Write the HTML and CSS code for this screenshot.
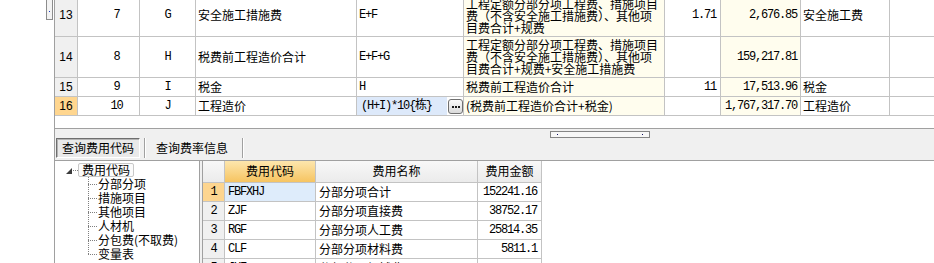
FILE: index.html
```html
<!DOCTYPE html>
<html lang="zh-CN">
<head>
<meta charset="utf-8">
<title>费用汇总</title>
<link rel="stylesheet" href="styles.css">
</head>
<body>
<div class="app">
  <div class="gutter"><div class="thumb"><i class="dot"></i></div></div>
  <div class="main">
    <div class="frame">
      <div class="grid">
        <div class="row h42">
          <div class="rh">13</div>
          <div class="seq mono">7</div>
          <div class="ctr mono">G</div>
          <div>安全施工措施费</div>
          <div class="mono">E+F</div>
          <div class="desc"><span>工程定额分部分项工程费、措施项目费（不含安全施工措施费）、其他项目费合计+规费</span></div>
          <div class="num mono">1.71</div>
          <div class="amt mono">2,676.85</div>
          <div>安全施工费</div>
          <div class="end"></div>
        </div>
        <div class="row h41">
          <div class="rh">14</div>
          <div class="seq mono">8</div>
          <div class="ctr mono">H</div>
          <div>税费前工程造价合计</div>
          <div class="mono">E+F+G</div>
          <div class="desc"><span>工程定额分部分项工程费、措施项目费（不含安全施工措施费）、其他项目费合计+规费+安全施工措施费</span></div>
          <div class="num mono"></div>
          <div class="amt mono">159,217.81</div>
          <div></div>
          <div class="end"></div>
        </div>
        <div class="row h19">
          <div class="rh">15</div>
          <div class="seq mono">9</div>
          <div class="ctr mono">I</div>
          <div>税金</div>
          <div class="mono">H</div>
          <div class="desc"><span>税费前工程造价合计</span></div>
          <div class="num mono">11</div>
          <div class="amt mono">17,513.96</div>
          <div>税金</div>
          <div class="end"></div>
        </div>
        <div class="row h19">
          <div class="rh cur">16</div>
          <div class="seq mono">10</div>
          <div class="ctr mono">J</div>
          <div>工程造价</div>
          <div class="expr"><span class="edit mono">(H+I)*10{栋}</span><span class="dots"><svg width="13" height="13" viewBox="0 0 13 13"><rect x="3" y="6" width="2" height="2" fill="#1a1a1a"/><rect x="6" y="6" width="2" height="2" fill="#1a1a1a"/><rect x="9" y="6" width="2" height="2" fill="#1a1a1a"/></svg></span></div>
          <div class="desc"><span>(税费前工程造价合计+税金)</span></div>
          <div class="num mono"></div>
          <div class="amt mono">1,767,317.70</div>
          <div>工程造价</div>
          <div class="end"></div>
        </div>
      </div>
    </div>

    <div class="band">
      <div class="handle"><i></i><i></i></div>
      <div class="tabs">
        <div class="tab active">查询费用代码</div>
        <div class="sep"></div>
        <div class="tab">查询费率信息</div>
        <div class="sep"></div>
      </div>
    </div>

    <div class="lower">
      <div class="tree">
        <div class="root">
          <svg class="exp" width="6" height="6" viewBox="0 0 6 6"><path d="M6 0V6H0Z" fill="#3c3c3c"/></svg>
          <span class="conn"></span>
          <span class="label">费用代码</span>
        </div>
        <div class="children">
          <div class="node"><span class="branch"></span><span class="txt">分部分项</span></div>
          <div class="node"><span class="branch"></span><span class="txt">措施项目</span></div>
          <div class="node"><span class="branch"></span><span class="txt">其他项目</span></div>
          <div class="node"><span class="branch"></span><span class="txt">人材机</span></div>
          <div class="node"><span class="branch"></span><span class="txt">分包费(不取费)</span></div>
          <div class="node last"><span class="branch"></span><span class="txt">变量表</span></div>
        </div>
      </div>

      <div class="codes">
        <div class="crow head">
          <div class="corner"></div>
          <div class="hsel">费用代码</div>
          <div>费用名称</div>
          <div>费用金额</div>
        </div>
        <div class="crow">
          <div class="crh cur mono">1</div>
          <div class="code sel mono">FBFXHJ</div>
          <div class="name">分部分项合计</div>
          <div class="money mono">152241.16</div>
        </div>
        <div class="crow">
          <div class="crh mono">2</div>
          <div class="code mono">ZJF</div>
          <div class="name">分部分项直接费</div>
          <div class="money mono">38752.17</div>
        </div>
        <div class="crow">
          <div class="crh mono">3</div>
          <div class="code mono">RGF</div>
          <div class="name">分部分项人工费</div>
          <div class="money mono">25814.35</div>
        </div>
        <div class="crow">
          <div class="crh mono">4</div>
          <div class="code mono">CLF</div>
          <div class="name">分部分项材料费</div>
          <div class="money mono">5811.1</div>
        </div>
        <div class="crow">
          <div class="crh mono">5</div>
          <div class="code mono">JXF</div>
          <div class="name">分部分项机械费</div>
          <div class="money mono"></div>
        </div>
      </div>
    </div>
  </div>
</div>
</body>
</html>
```

FILE: styles.css
```css
* { box-sizing: border-box; }
html, body { margin: 0; padding: 0; background: #fff; }
body {
  width: 934px;
  height: 263px;
  overflow: hidden;
  font: 12px/1.2 "Noto Sans CJK SC", "Noto Sans", sans-serif;
  color: #000;
}
.mono {
  font-family: "Liberation Mono", "Noto Sans CJK SC", monospace;
  letter-spacing: -1.2px;
}
.app { display: flex; height: 263px; }

/* left gutter with scroll thumb */
.gutter { width: 54px; flex: none; background: #fff; }
.thumb {
  margin-left: 46px;
  margin-top: -1px;
  width: 7px;
  height: 21px;
  border: 1px solid #8c8c8c;
  background: #f3f3f3;
  display: flex;
  justify-content: center;
  align-items: flex-end;
  padding-bottom: 7px;
}
.thumb .dot { display: block; width: 1px; height: 1px; background: #1c3cc8; }

.main {
  flex: 1;
  min-width: 0;
  border-left: 1px solid #a0a0a0;
  display: flex;
  flex-direction: column;
}

/* upper grid */
.frame {
  flex: none;
  height: 129px;
  border-bottom: 1px solid #a0a0a0;
  overflow: hidden;
  background: #fff;
}
.grid { margin-top: -5px; }
.row {
  display: grid;
  grid-template-columns: 23px 62px 56px 161px 107px 201px 56px 80px 89px 1fr;
}
.row > div {
  border-right: 1px solid #c3c3c3;
  border-bottom: 1px solid #c3c3c3;
  display: flex;
  align-items: center;
  padding: 0 2px;
  white-space: nowrap;
  overflow: hidden;
}
.row > .end { border-right: none; }
.h42 { height: 42px; }
.h41 { height: 41px; }
.h19 { height: 19px; }
.row > .rh {
  background: #f0f0f0;
  justify-content: center;
  font-family: "Liberation Sans", sans-serif;
  padding: 0;
}
.row > .rh.cur { background: #ffd68f; }
.row > .seq { justify-content: center; padding-left: 18px; }
.row > .ctr { justify-content: center; }
.row > .desc {
  background: #fffdee;
  white-space: normal;
  line-height: 12px;
}
.row > .num { justify-content: flex-end; padding-right: 4px; }
.row > .amt { background: #fffdee; justify-content: flex-end; padding-right: 3px; }
.row > .expr { padding: 0; align-items: stretch; }
.expr .edit {
  flex: 1;
  background: #dde9fa;
  display: flex;
  align-items: center;
  padding-left: 4px;
}
.expr .dots {
  display: flex;
  align-items: center;
  padding: 0 0 0 1px;
}
.expr .dots svg {
  display: block;
  width: 15px;
  height: 15px;
  border: 1px solid #6f6f6f;
  border-radius: 3px;
  background: linear-gradient(#fafafa, #dadada);
}

/* band with splitter + tabs */
.band {
  flex: none;
  height: 32px;
  background: #f0f0f0;
  border-bottom: 1px solid #a0a0a0;
  padding-top: 2px;
}
.handle {
  margin-left: 495px;
  width: 100px;
  height: 7px;
  border: 1px solid #858585;
  background: #f7f7f7;
  display: flex;
  justify-content: space-between;
  align-items: center;
  padding: 0 6px;
}
.handle i { display: block; width: 1px; height: 1px; background: #101060; }
.tabs { display: flex; height: 20px; }
.tab {
  display: flex;
  align-items: center;
  justify-content: center;
  width: 92px;
}
.tab.active {
  margin-left: 1px;
  width: 84px;
  border: 1px solid;
  border-color: #6e6e6e #ffffff #ffffff #6e6e6e;
  box-shadow: inset 1px 1px 0 #b4b4b4;
  background: #e9e9e9;
}
.sep {
  width: 2px;
  margin-left: 4px;
  border-left: 1px solid #a0a0a0;
  border-right: 1px solid #ffffff;
}
.tab + .sep + .tab { margin-left: 0; }

/* lower area */
.lower {
  flex: 1;
  display: flex;
  background: #f0f0f0;
  min-height: 0;
  overflow: hidden;
}
.tree {
  width: 145px;
  flex: none;
  margin-right: 2px;
  background: #fff;
  border-right: 1px solid #a0a0a0;
  padding-top: 2px;
}
.root {
  display: flex;
  align-items: center;
  height: 14px;
  padding-left: 11px;
}
.exp { display: block; flex: none; margin-top: 1px; }
.conn {
  width: 5px;
  margin-left: 1px;
  border-top: 1px dotted #7f7f7f;
}
.label {
  height: 14px;
  line-height: 12px;
  padding: 0 3px;
  border: 1px solid #c8c8c8;
  border-radius: 2px;
  background: #fbfbfb;
}
.children { padding-left: 33px; }
.node { display: flex; height: 14px; line-height: 14px; }
.branch {
  width: 9px;
  flex: none;
  background:
    repeating-linear-gradient(to bottom, #7f7f7f 0 1px, transparent 1px 2px) left top / 1px 100% no-repeat,
    repeating-linear-gradient(to right, #7f7f7f 0 1px, transparent 1px 2px) left 7px / 100% 1px no-repeat;
}
.node.last .branch {
  background:
    repeating-linear-gradient(to bottom, #7f7f7f 0 1px, transparent 1px 2px) left top / 1px 8px no-repeat,
    repeating-linear-gradient(to right, #7f7f7f 0 1px, transparent 1px 2px) left 7px / 100% 1px no-repeat;
}
.txt { margin-left: 1px; white-space: nowrap; }

/* codes grid */
.codes {
  flex: 1;
  background: #fff;
  border-left: 1px solid #a0a0a0;
}
.crow {
  display: grid;
  grid-template-columns: 22px 91px 162px 64px;
  height: 19px;
}
.crow > div {
  border-right: 1px solid #c3c3c3;
  border-bottom: 1px solid #c3c3c3;
  display: flex;
  align-items: center;
  padding: 0 3px;
  white-space: nowrap;
  overflow: hidden;
}
.crow.head { height: 22px; }
.crow.head > div {
  justify-content: center;
  background: linear-gradient(#f8f8f8, #ebebeb);
}
.crow.head > .hsel { background: linear-gradient(#fde6ad, #f6c461); }
.crow > .crh { background: #f0f0f0; justify-content: center; padding: 0; }
.crow > .crh.cur { background: #fdd58f; }
.crow > .sel { background: #deecfb; }
.crow > .money { justify-content: flex-end; padding-right: 4px; }
```
